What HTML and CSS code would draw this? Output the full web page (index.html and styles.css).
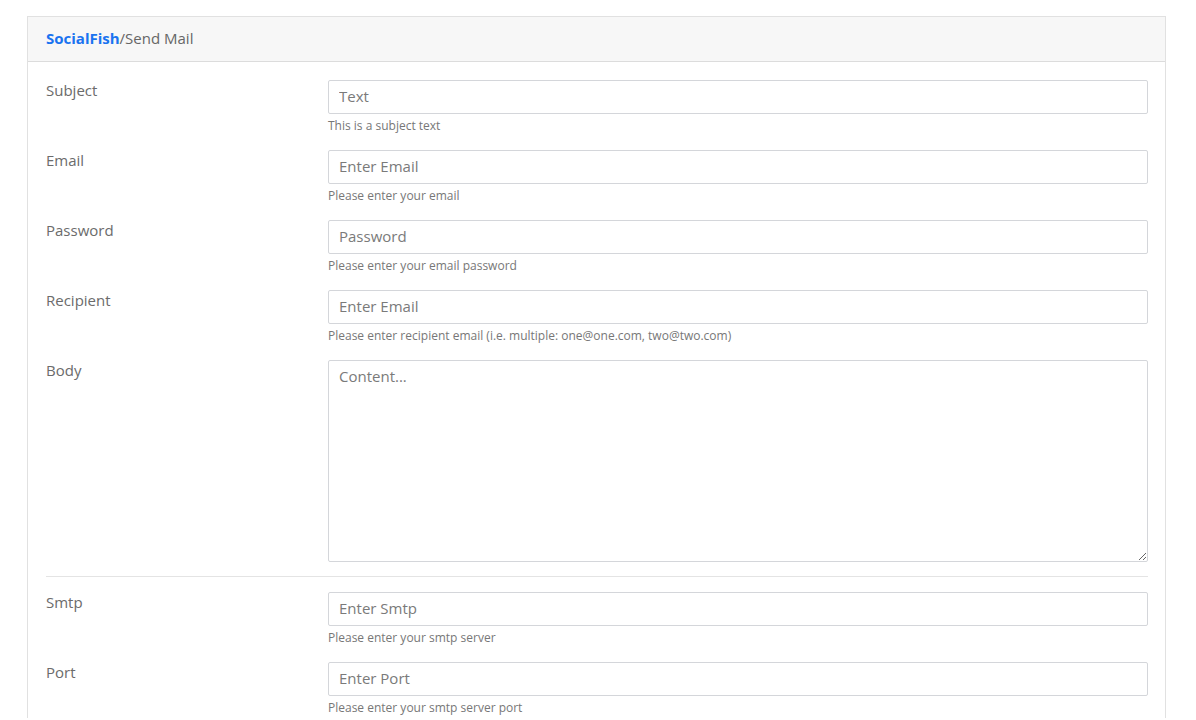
FILE: index.html
```html
<!DOCTYPE html>
<html lang="en">
<head>
<meta charset="utf-8">
<title>SocialFish - Send Mail</title>
<link rel="stylesheet" href="styles.css">
</head>
<body>
<div class="page">
  <div class="card">
    <div class="card-header"><span class="brand">SocialFish</span>/Send Mail</div>
    <div class="card-body">
      <div class="row">
        <label class="label">Subject</label>
        <div class="field">
          <input class="input" type="text" placeholder="Text">
          <div class="help">This is a subject text</div>
        </div>
      </div>
      <div class="row">
        <label class="label">Email</label>
        <div class="field">
          <input class="input" type="text" placeholder="Enter Email">
          <div class="help">Please enter your email</div>
        </div>
      </div>
      <div class="row">
        <label class="label">Password</label>
        <div class="field">
          <input class="input" type="text" placeholder="Password">
          <div class="help">Please enter your email password</div>
        </div>
      </div>
      <div class="row">
        <label class="label">Recipient</label>
        <div class="field">
          <input class="input" type="text" placeholder="Enter Email">
          <div class="help">Please enter recipient email (i.e. multiple: one@one.com, two@two.com)</div>
        </div>
      </div>
      <div class="row row-body">
        <label class="label">Body</label>
        <div class="field">
          <textarea class="input textarea" placeholder="Content..."></textarea>
        </div>
      </div>
      <hr class="divider">
      <div class="row">
        <label class="label">Smtp</label>
        <div class="field">
          <input class="input" type="text" placeholder="Enter Smtp">
          <div class="help">Please enter your smtp server</div>
        </div>
      </div>
      <div class="row">
        <label class="label">Port</label>
        <div class="field">
          <input class="input" type="text" placeholder="Enter Port">
          <div class="help">Please enter your smtp server port</div>
        </div>
      </div>
    </div>
  </div>
</div>
</body>
</html>
```
FILE: styles.css
```css
html, body {
  margin: 0;
  padding: 0;
  background: #ffffff;
}
body {
  font-family: "Open Sans", "Liberation Sans", sans-serif;
  color: #6b6b6b;
  font-size: 15px;
}
.page {
  padding: 16px 30px 0 27px;
}
.card {
  border: 1px solid #e1e1e1;
  border-bottom: none;
}
.card-header {
  height: 45px;
  box-sizing: border-box;
  background: #f7f7f7;
  border-bottom: 1px solid #dcdcdc;
  padding: 0 18px 2px 18px;
  display: flex;
  align-items: center;
  font-size: 15px;
  color: #666666;
}
.brand {
  color: #1a73f0;
  font-weight: 700;
}
.card-body {
  padding: 18px 17px 0 18px;
}
.row {
  display: grid;
  grid-template-columns: 282px 1fr;
  margin-bottom: 14px;
}
.label {
  line-height: 21px;
  color: #6b6b6b;
}
.field {
  display: flex;
  flex-direction: column;
}
.input {
  height: 34px;
  box-sizing: border-box;
  border: 1px solid #d4d6da;
  border-radius: 2px;
  padding: 0 10px 2px 10px;
  font-family: inherit;
  font-size: 15px;
  color: #6b6b6b;
  outline: none;
  margin: 0;
}
.input::placeholder {
  color: #7a7a7a;
}
.help {
  margin-top: 3px;
  margin-bottom: 1px;
  line-height: 18px;
  font-size: 12px;
  color: #777777;
}
.textarea {
  height: 202px;
  padding: 5px 10px;
  resize: vertical;
  line-height: 20px;
}
.divider {
  border: none;
  border-top: 1px solid #e4e4e4;
  margin: 0 0 15px 0;
}
```
